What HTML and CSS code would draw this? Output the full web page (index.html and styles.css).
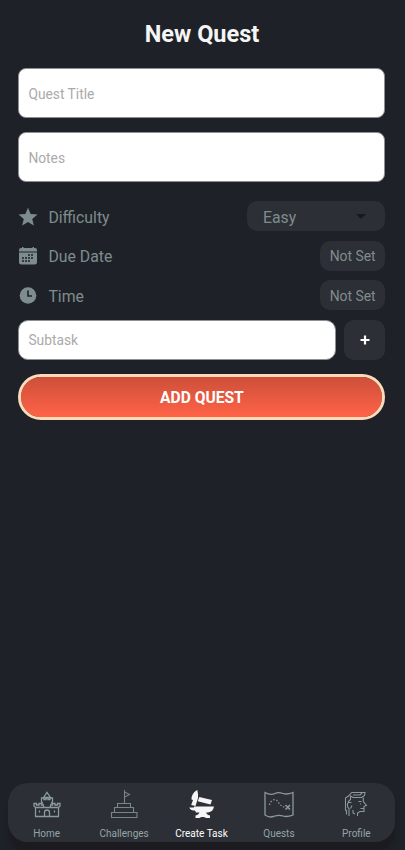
FILE: index.html
```html
<!DOCTYPE html>
<html lang="en">
<head>
<meta charset="utf-8">
<meta name="viewport" content="width=device-width, initial-scale=1">
<title>New Quest</title>
<link rel="stylesheet" href="styles.css">
</head>
<body>
<main class="screen">
  <h1 class="title">New Quest</h1>
  <form class="form">
    <input class="field" type="text" placeholder="Quest Title">
    <input class="field" type="text" placeholder="Notes">
    <div class="options">
      <div class="option">
        <svg class="option-icon" viewBox="0 0 20 20"><path d="M10 .8l2.600 6.300 6.900.5-5.300 4.300 1.700 6.700L10 15l-5.900 3.600 1.700-6.700L.5 7.600l6.900-.5z"/></svg>
        <span class="option-label">Difficulty</span>
        <div class="pill select"><span>Easy</span><span class="caret"></span></div>
      </div>
      <div class="option">
        <svg class="option-icon" viewBox="0 0 20 20"><path d="M1 5.500V4a2 2 0 0 1 2-2h1V1h1.500v1h9V1H16v1h1a2 2 0 0 1 2 2v1.500z"/><path d="M1 6.500h18V16a2.500 2.500 0 0 1-2.500 2.500h-13A2.500 2.500 0 0 1 1 16z"/><path class="days" d="M10 9h2m1 0h2M4 12h2m1 0h2m1 0h2m1 0h2M4 15h2m1 0h2m1 0h2"/></svg>
        <span class="option-label">Due Date</span>
        <div class="pill">Not Set</div>
      </div>
      <div class="option">
        <svg class="option-icon" viewBox="0 0 20 20"><circle cx="10" cy="9.500" r="8.300"/><path class="hands" d="M10 4.500v5.500h4"/></svg>
        <span class="option-label">Time</span>
        <div class="pill">Not Set</div>
      </div>
    </div>
    <div class="subtask-row">
      <input class="field subtask" type="text" placeholder="Subtask">
      <button class="plus" type="button" aria-label="Add subtask"><svg class="plus-icon" viewBox="0 0 10 10"><path d="M5 .5v9M.5 5h9"/></svg></button>
    </div>
    <button class="submit" type="button">ADD QUEST</button>
  </form>
  <nav class="tabs">
    <a class="tab">
      <svg class="tab-icon" viewBox="0 0 30 30"><path class="bold" d="M3.500 26.500v-9L2 16v-2.500h2.500V15H7v-1.500h2.500V15h2v2.500h-8M26.500 26.500v-9L28 16v-2.500h-2.500V15H23v-1.500h-2.500V15h-2v2.500h8M3 26.500h24M11 13.500L9.500 12V8h2.500v1.500h2V8h2v1.500h2V8h2.500v4L19 13.500M11.500 7.500L15 2.500l3.500 5zM12.500 26.500v-4a2.500 2.500 0 0 1 5 0v4M7.500 20.500v2m15-2v2M11.500 17.500h7"/></svg>
      <span>Home</span>
    </a>
    <a class="tab">
      <svg class="tab-icon dim" viewBox="0 0 30 30"><path d="M2.500 22.500h25.500v5H2.500zM5.500 17.500h19v5h-19zM8.500 13.500h13v4h-13zM15.500 13.500V0M15.500 2l5 2.500-5 2.500"/></svg>
      <span>Challenges</span>
    </a>
    <a class="tab active">
      <svg class="tab-icon solid" viewBox="0 0 30 30"><path d="M10.300 0C7 1.500 4.500 5 4.500 9.500L6 10l-1.800 5 4.300 1L11 8V4z"/><path d="M12.300 7l12.700 3-1.500 4.500-12.800-3.300z"/><path d="M2.300 17.500H7v-1h20c-.5 3.500-2.500 5.500-6 6H9c-.5-1.500-1-2-2-2-2.500 0-4-1-4.700-3z"/><path d="M12.500 22h6.500c.3 2 1.500 3 4 3.500v2.500h-4c-1.500-1.300-5-1.300-6.500 0h-4v-2.500c2.500-.5 3.500-1.500 4-3.500z"/></svg>
      <span>Create Task</span>
    </a>
    <a class="tab">
      <svg class="tab-icon" viewBox="0 0 30 30"><path class="bold" d="M1 2.500c5.500 3 8 2 10 1s5-1 8 0 5 1 10-1v22.500c-5 2-7 2-10 1s-5-1-8 0-5 2-10-1z"/><path class="route" d="M5.300 15c1.500-4 3.500-5.500 5.500-5.300 4 .3 3.500 5.800 9.500 7.300"/><path class="cross" d="M21.500 15l4.500 4.500m0-4.500l-4.500 4.500"/></svg>
      <span>Quests</span>
    </a>
    <a class="tab">
      <svg class="tab-icon" viewBox="0 0 30 30"><path d="M8 26v-7.500C6 17.500 6 13 7.500 12.500h3M5.500 21l-1-1V8l3-2 3.200-3.500H24l-.5 3L20.500 7.500H12L9.500 6v3.500L7 12M12 5h7l2-2M22.300 7.500v4l3.200 4-2.500.8v5.200h-4l-2.500 1.500V26M11 15.500l-1.500 3M12 20v3l2 1M17.500 11.500h3M19 14h1M19.500 18.500H23M5.500 20v4.500"/></svg>
      <span>Profile</span>
    </a>
  </nav>
</main>
</body>
</html>
```

FILE: styles.css
```css
* { box-sizing: border-box; }

body {
  margin: 0;
  background: #1e2228;
  color: #7f8c8d;
  font-family: Roboto, sans-serif;
}

.screen {
  display: flex;
  flex-direction: column;
  height: 850px;
  padding: 20px 8px 8px;
  overflow: hidden;
}

.title {
  margin: 0 1px 20.400px 0;
  color: #f5f5f5;
  font-size: 23.500px;
  font-weight: 700;
  line-height: 28px;
  text-align: center;
}

.form {
  display: flex;
  flex-direction: column;
  margin: 0 11.600px 0 10.400px;
}

.field {
  width: 100%;
  height: 50px;
  margin: 0 0 14px;
  padding: 2px 9px 0;
  border: 1px solid #8b9091;
  border-radius: 8px;
  background: #fff;
  font: 13.800px/20px Roboto, sans-serif;
}

.field::placeholder { color: #aaa; opacity: 1; }

.options {
  display: flex;
  flex-direction: column;
  gap: 9.600px;
  margin: 4.800px 0 9.300px;
}

.option { display: flex; align-items: center; height: 30px; }

.option-icon { width: 20px; height: 20px; margin-top: 1px; fill: #7f8c8d; }

.days, .hands { fill: none; stroke: #1e2228; stroke-width: 1.600; }

.option-label { margin-left: 10px; padding-top: 2px; font-size: 15.800px; }

.pill {
  display: flex;
  align-items: center;
  height: 30px;
  margin-left: auto;
  padding: 1px 9.800px 0;
  border-radius: 10px;
  background: #2c2f36;
  font-size: 13.900px;
}

.select {
  justify-content: space-between;
  width: 138px;
  padding: 2px 19px 0 15.500px;
  font-size: 15.800px;
}

.caret {
  margin-bottom: 2px;
  border: 5px solid transparent;
  border-top-color: #17191c;
  border-bottom: 0;
}

.subtask-row { display: flex; gap: 8px; margin-bottom: 14px; }

.subtask { flex: 1; width: auto; min-width: 0; height: 40.500px; margin: 0; padding-top: 0; border-radius: 10px; }

.plus {
  display: flex;
  align-items: center;
  justify-content: center;
  width: 41.500px;
  height: 40px;
  padding: 1px 0 0;
  border: 0;
  border-radius: 10px;
  background: #2c2f36;
}

.plus-icon { width: 10px; height: 10px; stroke: #fff; stroke-width: 2.200; }

.submit {
  height: 45.500px;
  padding: 2px 0 0;
  border: 3px solid #ffdab9;
  border-radius: 23px;
  background: linear-gradient(#cd4f39, #ff6347) padding-box;
  color: #fff;
  font: 700 15.600px Roboto, sans-serif;
}

.tabs {
  display: flex;
  height: 59px;
  margin: auto 2px 0 0;
  border-radius: 20px;
  background: #2c2f36;
  box-shadow: 0 10px 4px #1c1b20;
}

.tab {
  display: flex;
  flex: 1;
  flex-direction: column;
  align-items: center;
  gap: 8px;
  padding-top: 7px;
  color: #95a5a6;
  font-size: 10px;
  line-height: 12px;
}

.tab-icon {
  width: 30px;
  height: 30px;
  fill: none;
  stroke: #8b9a9a;
  stroke-width: 1.100;
}

.active { color: #fff; }
.dim { stroke: #778583; }
.solid { fill: #f5f5f5; stroke: none; }
.bold { stroke-width: 1.300; }
.route { stroke-width: 1.300; stroke-dasharray: 1.500 1.700; }
.cross { stroke-width: 1.600; }
```
